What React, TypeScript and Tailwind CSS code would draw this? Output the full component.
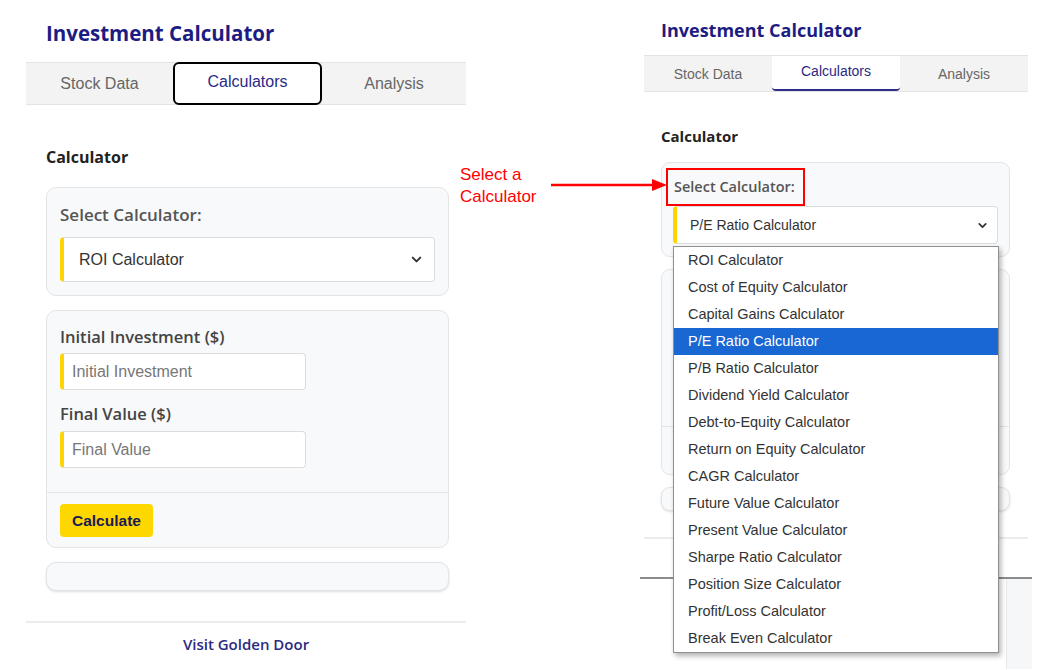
import { ChevronDown } from "lucide-react";

const CALCULATORS = [
  "ROI Calculator",
  "Cost of Equity Calculator",
  "Capital Gains Calculator",
  "P/E Ratio Calculator",
  "P/B Ratio Calculator",
  "Dividend Yield Calculator",
  "Debt-to-Equity Calculator",
  "Return on Equity Calculator",
  "CAGR Calculator",
  "Future Value Calculator",
  "Present Value Calculator",
  "Sharpe Ratio Calculator",
  "Position Size Calculator",
  "Profit/Loss Calculator",
  "Break Even Calculator",
];

const TABS = ["Stock Data", "Calculators", "Analysis"];

const heading = "font-['Open_Sans',sans-serif]";
const arial = "font-['Liberation_Sans',Arial,sans-serif]";

function LeftPanel() {
  return (
    <div className="ml-[26px] w-[440px] shrink-0">
      <div className={`h-[62px] pt-[18px] pl-5 text-[20.5px] leading-[30px] font-bold text-[#1c1c82] ${heading}`}>
        Investment Calculator
      </div>

      {/* Tabs */}
      <div className="grid grid-cols-[147px_149px_144px] h-[43px] bg-[#f3f3f3] border-y border-[#e4e4e4]">
        {TABS.map((t) => (
          <div
            key={t}
            className={`flex items-center justify-center text-base ${arial} ${
              t === "Calculators"
                ? "bg-white border-2 border-black rounded-md -my-px text-[#2a2a85] pb-1"
                : "text-[#666]"
            }`}
          >
            {t}
          </div>
        ))}
      </div>

      <div className="pl-5 pr-[17px]">
        <div className={`mt-10 text-base leading-6 font-bold text-[#222] ${heading}`}>Calculator</div>

        {/* Select card */}
        <div className="mt-[18px] h-[109px] rounded-[10px] border border-[#e3e4e6] bg-[#f8f9fa] px-[13px] pt-[15px]">
          <div className={`text-[17px] leading-6 font-semibold text-[#555] ${heading}`}>Select Calculator:</div>
          <div className="mt-[10px] h-[45px] flex items-center justify-between rounded border border-[#dcdcdc] border-l-4 border-l-[#ffd400] bg-white pl-[15px] pr-[10px]">
            <span className={`text-base text-[#333] ${arial}`}>ROI Calculator</span>
            <ChevronDown size={15} strokeWidth={3.2} className="text-[#333]" />
          </div>
        </div>

        {/* Inputs card */}
        <div className="mt-[14px] rounded-[10px] border border-[#e3e4e6] bg-[#f8f9fa]">
          <div className="px-[13px] pt-[14px] pb-[24px]">
            <div className={`text-[16.5px] leading-6 font-semibold text-[#444] ${heading}`}>Initial Investment ($)</div>
            <div className="mt-[4px] w-[246px] h-[37px] flex items-center rounded border border-[#dcdcdc] border-l-4 border-l-[#ffd400] bg-white pl-[8px]">
              <span className={`text-base text-[#777] ${arial}`}>Initial Investment</span>
            </div>
            <div className={`mt-3 text-[16.5px] leading-6 font-semibold text-[#444] ${heading}`}>Final Value ($)</div>
            <div className="mt-[5px] w-[246px] h-[37px] flex items-center rounded border border-[#dcdcdc] border-l-4 border-l-[#ffd400] bg-white pl-[8px]">
              <span className={`text-base text-[#777] ${arial}`}>Final Value</span>
            </div>
          </div>
          <div className="border-t border-[#e3e4e6] px-[13px] pt-[11px] pb-[10px]">
            <button className={`h-[33px] px-[12px] rounded bg-[#ffd700] text-[15.5px] font-bold text-[#1a1a55] ${arial}`}>
              Calculate
            </button>
          </div>
        </div>

        <div className="mt-[14px] h-[29px] rounded-[10px] border border-[#e3e4e6] bg-[#f8f9fa] shadow-sm" />
      </div>

      <div className="mt-[30px] border-t-2 border-[#ececec] pt-[9px] text-center">
        <span className={`text-[15px] font-semibold text-[#2b2b80] ${heading}`}>Visit Golden Door</span>
      </div>
    </div>
  );
}

function RightPanel() {
  return (
    <div className="ml-[178px] w-[384px] shrink-0">
      <div className={`h-[55px] pt-[17px] pl-[17px] text-[18px] leading-[26px] font-bold text-[#1c1c82] ${heading}`}>
        Investment Calculator
      </div>

      <div className="grid grid-cols-3 h-[37px] bg-[#f3f3f3] border-y border-[#e4e4e4]">
        {TABS.map((t) => (
          <div
            key={t}
            className={`flex items-center justify-center text-sm ${arial} ${
              t === "Calculators"
                ? "bg-white border-b-2 border-[#2f2f8a] rounded-b-sm text-[#2a2a85] pb-1"
                : "text-[#666]"
            }`}
          >
            {t}
          </div>
        ))}
      </div>

      <div className="pl-[17px] pr-[18px]">
        <div className={`mt-[34px] text-[15px] leading-5 font-bold text-[#222] ${heading}`}>Calculator</div>

        <div className="mt-[16px] h-[95px] rounded-[9px] border border-[#e3e4e6] bg-[#f8f9fa] px-[11px] pt-[14px]">
          <div className={`pl-[1px] whitespace-nowrap text-[14.5px] leading-5 font-semibold text-[#555] ${heading}`}>
            Select Calculator:
          </div>
          <div className="mt-[9px] h-[38px] flex items-center justify-between rounded border border-[#dcdcdc] border-l-4 border-l-[#ffd400] bg-white pl-[13px] pr-[8px]">
            <span className={`text-sm text-[#333] ${arial}`}>P/E Ratio Calculator</span>
            <ChevronDown size={13} strokeWidth={3.2} className="text-[#333]" />
          </div>
        </div>

        <div className="mt-[12px] rounded-[9px] border border-[#e3e4e6] bg-[#f8f9fa]">
          <div className="h-[156px]" />
          <div className="h-[48px] border-t border-[#e3e4e6]" />
        </div>

        <div className="mt-[12px] h-[24px] rounded-[9px] border border-[#e3e4e6] bg-[#f8f9fa] shadow-sm" />
      </div>

      <div className="mt-[26px] h-[40px] border-t-2 border-[#ececec]" />
      <div className="-mx-1 h-[92px] border-t-2 border-[#8c8c8c] flex justify-end">
        <div className="w-[26px] bg-[#f6f7f8] border-l border-[#e8e8e8]" />
      </div>
    </div>
  );
}

export default function App() {
  return (
    <div className="relative w-[1045px] h-[670px] overflow-hidden bg-white">
      <div className="flex items-start">
        <LeftPanel />
        <RightPanel />
      </div>

      {/* Annotation */}
      <div className={`absolute left-[460px] top-[164px] text-[17px] leading-[22px] text-[#ff0000] ${arial}`}>
        Select a
        <br />
        Calculator
      </div>
      <svg className="absolute left-[550px] top-[177px]" width="120" height="16" viewBox="0 0 120 16">
        <line x1="1" y1="8" x2="104" y2="8" stroke="#ff0000" strokeWidth="2.5" />
        <polygon points="102,2 117,8 102,14" fill="#ff0000" />
      </svg>
      <div className="absolute left-[666px] top-[168px] w-[139px] h-[38px] border-2 border-[#ff0000]" />

      {/* Open dropdown list */}
      <div className="absolute left-[673px] top-[246px] w-[326px] border border-[#8f8f8f] bg-white shadow-[2px_3px_5px_rgba(0,0,0,0.3)]">
        {CALCULATORS.map((c) => (
          <div
            key={c}
            className={`h-[27px] flex items-center pl-[14px] text-[14.5px] ${arial} ${
              c === "P/E Ratio Calculator" ? "bg-[#1967d2] text-white" : "text-[#333]"
            }`}
          >
            {c}
          </div>
        ))}
      </div>
    </div>
  );
}
